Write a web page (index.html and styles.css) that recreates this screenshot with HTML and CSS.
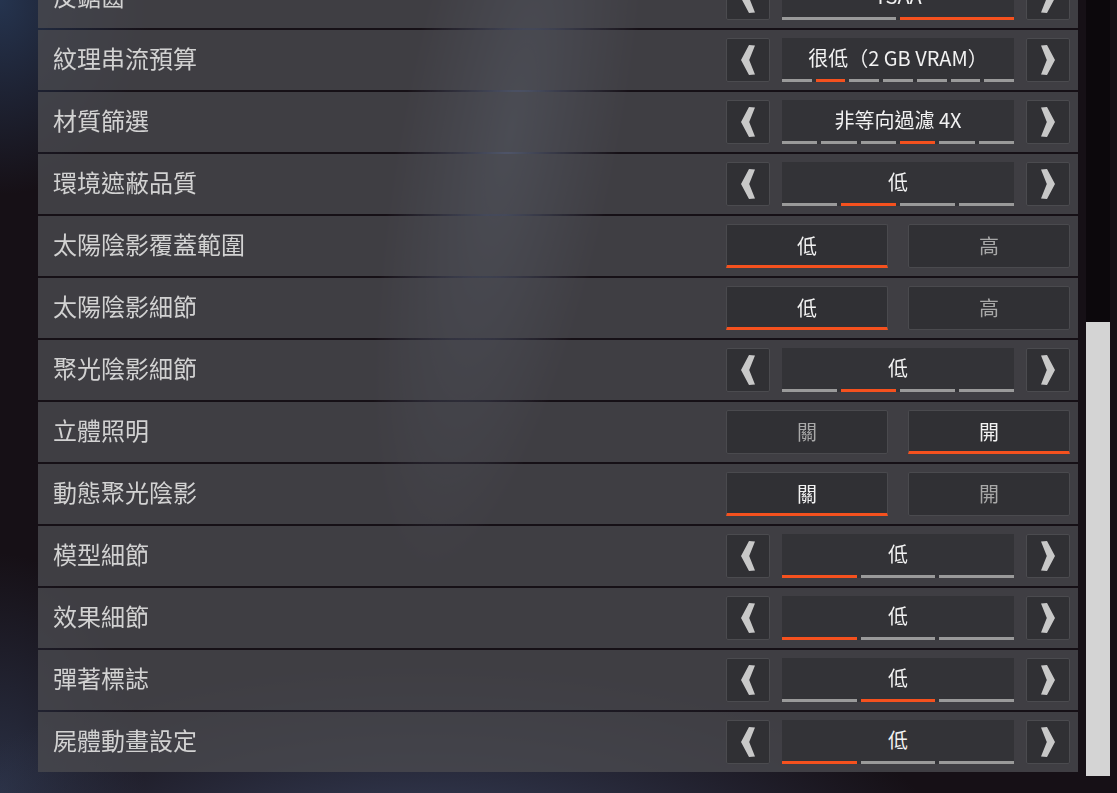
FILE: index.html
```html
<!DOCTYPE html>
<html lang="zh-Hant">
<head>
<meta charset="utf-8">
<title>影像設定</title>
<link rel="stylesheet" href="styles.css">
</head>
<body>
<div class="screen">
  <div class="panel">
    <div class="row">
      <div class="label">反鋸齒</div>
      <div class="ctrl">
        <div class="arrow"><svg width="14" height="30" viewBox="0 0 14 30"><polygon points="8,0 14,0.6 8.2,15 14,29.4 8,30 0,15"/></svg></div>
        <div class="value"><div class="value-text">TSAA</div><div class="segs"><i class="seg"></i><i class="seg on"></i></div></div>
        <div class="arrow"><svg class="flip" width="14" height="30" viewBox="0 0 14 30"><polygon points="8,0 14,0.6 8.2,15 14,29.4 8,30 0,15"/></svg></div>
      </div>
    </div>
    <div class="row">
      <div class="label">紋理串流預算</div>
      <div class="ctrl">
        <div class="arrow"><svg width="14" height="30" viewBox="0 0 14 30"><polygon points="8,0 14,0.6 8.2,15 14,29.4 8,30 0,15"/></svg></div>
        <div class="value"><div class="value-text">很低（2 GB VRAM）</div><div class="segs"><i class="seg"></i><i class="seg on"></i><i class="seg"></i><i class="seg"></i><i class="seg"></i><i class="seg"></i><i class="seg"></i></div></div>
        <div class="arrow"><svg class="flip" width="14" height="30" viewBox="0 0 14 30"><polygon points="8,0 14,0.6 8.2,15 14,29.4 8,30 0,15"/></svg></div>
      </div>
    </div>
    <div class="row">
      <div class="label">材質篩選</div>
      <div class="ctrl">
        <div class="arrow"><svg width="14" height="30" viewBox="0 0 14 30"><polygon points="8,0 14,0.6 8.2,15 14,29.4 8,30 0,15"/></svg></div>
        <div class="value"><div class="value-text">非等向過濾 4X</div><div class="segs"><i class="seg"></i><i class="seg"></i><i class="seg"></i><i class="seg on"></i><i class="seg"></i><i class="seg"></i></div></div>
        <div class="arrow"><svg class="flip" width="14" height="30" viewBox="0 0 14 30"><polygon points="8,0 14,0.6 8.2,15 14,29.4 8,30 0,15"/></svg></div>
      </div>
    </div>
    <div class="row">
      <div class="label">環境遮蔽品質</div>
      <div class="ctrl">
        <div class="arrow"><svg width="14" height="30" viewBox="0 0 14 30"><polygon points="8,0 14,0.6 8.2,15 14,29.4 8,30 0,15"/></svg></div>
        <div class="value"><div class="value-text">低</div><div class="segs"><i class="seg"></i><i class="seg on"></i><i class="seg"></i><i class="seg"></i></div></div>
        <div class="arrow"><svg class="flip" width="14" height="30" viewBox="0 0 14 30"><polygon points="8,0 14,0.6 8.2,15 14,29.4 8,30 0,15"/></svg></div>
      </div>
    </div>
    <div class="row">
      <div class="label">太陽陰影覆蓋範圍</div>
      <div class="ctrl toggles">
        <div class="opt on">低</div>
        <div class="opt">高</div>
      </div>
    </div>
    <div class="row">
      <div class="label">太陽陰影細節</div>
      <div class="ctrl toggles">
        <div class="opt on">低</div>
        <div class="opt">高</div>
      </div>
    </div>
    <div class="row">
      <div class="label">聚光陰影細節</div>
      <div class="ctrl">
        <div class="arrow"><svg width="14" height="30" viewBox="0 0 14 30"><polygon points="8,0 14,0.6 8.2,15 14,29.4 8,30 0,15"/></svg></div>
        <div class="value"><div class="value-text">低</div><div class="segs"><i class="seg"></i><i class="seg on"></i><i class="seg"></i><i class="seg"></i></div></div>
        <div class="arrow"><svg class="flip" width="14" height="30" viewBox="0 0 14 30"><polygon points="8,0 14,0.6 8.2,15 14,29.4 8,30 0,15"/></svg></div>
      </div>
    </div>
    <div class="row">
      <div class="label">立體照明</div>
      <div class="ctrl toggles">
        <div class="opt">關</div>
        <div class="opt on">開</div>
      </div>
    </div>
    <div class="row">
      <div class="label">動態聚光陰影</div>
      <div class="ctrl toggles">
        <div class="opt on">關</div>
        <div class="opt">開</div>
      </div>
    </div>
    <div class="row">
      <div class="label">模型細節</div>
      <div class="ctrl">
        <div class="arrow"><svg width="14" height="30" viewBox="0 0 14 30"><polygon points="8,0 14,0.6 8.2,15 14,29.4 8,30 0,15"/></svg></div>
        <div class="value"><div class="value-text">低</div><div class="segs"><i class="seg on"></i><i class="seg"></i><i class="seg"></i></div></div>
        <div class="arrow"><svg class="flip" width="14" height="30" viewBox="0 0 14 30"><polygon points="8,0 14,0.6 8.2,15 14,29.4 8,30 0,15"/></svg></div>
      </div>
    </div>
    <div class="row">
      <div class="label">效果細節</div>
      <div class="ctrl">
        <div class="arrow"><svg width="14" height="30" viewBox="0 0 14 30"><polygon points="8,0 14,0.6 8.2,15 14,29.4 8,30 0,15"/></svg></div>
        <div class="value"><div class="value-text">低</div><div class="segs"><i class="seg on"></i><i class="seg"></i><i class="seg"></i></div></div>
        <div class="arrow"><svg class="flip" width="14" height="30" viewBox="0 0 14 30"><polygon points="8,0 14,0.6 8.2,15 14,29.4 8,30 0,15"/></svg></div>
      </div>
    </div>
    <div class="row">
      <div class="label">彈著標誌</div>
      <div class="ctrl">
        <div class="arrow"><svg width="14" height="30" viewBox="0 0 14 30"><polygon points="8,0 14,0.6 8.2,15 14,29.4 8,30 0,15"/></svg></div>
        <div class="value"><div class="value-text">低</div><div class="segs"><i class="seg"></i><i class="seg on"></i><i class="seg"></i></div></div>
        <div class="arrow"><svg class="flip" width="14" height="30" viewBox="0 0 14 30"><polygon points="8,0 14,0.6 8.2,15 14,29.4 8,30 0,15"/></svg></div>
      </div>
    </div>
    <div class="row">
      <div class="label">屍體動畫設定</div>
      <div class="ctrl">
        <div class="arrow"><svg width="14" height="30" viewBox="0 0 14 30"><polygon points="8,0 14,0.6 8.2,15 14,29.4 8,30 0,15"/></svg></div>
        <div class="value"><div class="value-text">低</div><div class="segs"><i class="seg on"></i><i class="seg"></i><i class="seg"></i></div></div>
        <div class="arrow"><svg class="flip" width="14" height="30" viewBox="0 0 14 30"><polygon points="8,0 14,0.6 8.2,15 14,29.4 8,30 0,15"/></svg></div>
      </div>
    </div>
  </div>
  <div class="scroll"><div class="thumb"></div></div>
</div>
</body>
</html>
```
FILE: styles.css
```css
html, body {
  margin: 0;
  height: 100%;
  overflow: hidden;
}

body {
  font-family: "Noto Sans CJK TC", "Noto Sans CJK SC", sans-serif;
  background:
    radial-gradient(ellipse 700px 260px at 38% 108%, rgba(58, 68, 96, 0.95), rgba(58, 68, 96, 0) 75%),
    radial-gradient(ellipse 200px 260px at 0% 0%, rgba(38, 54, 82, 0.95), rgba(38, 54, 82, 0) 75%),
    radial-gradient(ellipse 180px 300px at 0% 100%, rgba(44, 52, 74, 0.9), rgba(44, 52, 74, 0) 80%),
    #161016;
}

body::before {
  content: "";
  position: fixed;
  left: 370px;
  top: -160px;
  width: 220px;
  height: 900px;
  background: radial-gradient(ellipse 50% 50% at 50% 32%, rgba(115, 130, 158, 0.62), rgba(115, 130, 158, 0) 100%);
  transform: rotate(11deg);
  pointer-events: none;
}

.screen {
  position: relative;
  display: flex;
  align-items: flex-start;
}

.panel {
  margin-left: 38px;
  margin-top: -32px;
  width: 1040px;
  display: flex;
  flex-direction: column;
  gap: 2px;
}

.row {
  height: 60px;
  box-sizing: border-box;
  padding: 0 8px 0 15px;
  display: flex;
  align-items: center;
  justify-content: space-between;
  background: rgba(74, 74, 79, 0.8);
}

.label {
  font-size: 24px;
  color: #d2d2d2;
  line-height: 1;
  padding-bottom: 4px;
}

.ctrl {
  width: 344px;
  height: 44px;
  display: flex;
  gap: 12px;
}

.arrow {
  width: 44px;
  flex: none;
  box-sizing: border-box;
  border: 1px solid #4b4b4f;
  border-radius: 2px;
  background: #303034;
  display: flex;
  align-items: center;
  justify-content: center;
}

.arrow svg {
  fill: #c8c8c8;
  display: block;
}

.arrow svg.flip {
  transform: scaleX(-1);
}

.value {
  flex: 1;
  display: flex;
  flex-direction: column;
  background: #333337;
}

.value-text {
  flex: 1;
  display: flex;
  align-items: center;
  justify-content: center;
  font-size: 20px;
  color: #f2f2f2;
  padding-bottom: 2px;
}

.segs {
  display: flex;
  gap: 4px;
  height: 3px;
}

.seg {
  flex: 1;
  background: #9a9a9a;
}

.seg.on {
  background: #f5511e;
}

.toggles {
  gap: 20px;
}

.opt {
  flex: 1;
  box-sizing: border-box;
  border: 1px solid #4a4a4e;
  border-radius: 2px;
  background: #303034;
  display: flex;
  align-items: center;
  justify-content: center;
  font-size: 20px;
  color: #a8a8a8;
  padding-bottom: 2px;
}

.opt.on {
  color: #f2f2f2;
  border-bottom: 3px solid #f5511e;
  border-radius: 2px 2px 0 0;
  padding-bottom: 0;
}

.scroll {
  margin-left: 8px;
  width: 24px;
  height: 776px;
  background: #0c080c;
  display: flex;
  flex-direction: column;
  justify-content: flex-end;
}

.thumb {
  height: 454px;
  background: #d4d4d4;
}
```
